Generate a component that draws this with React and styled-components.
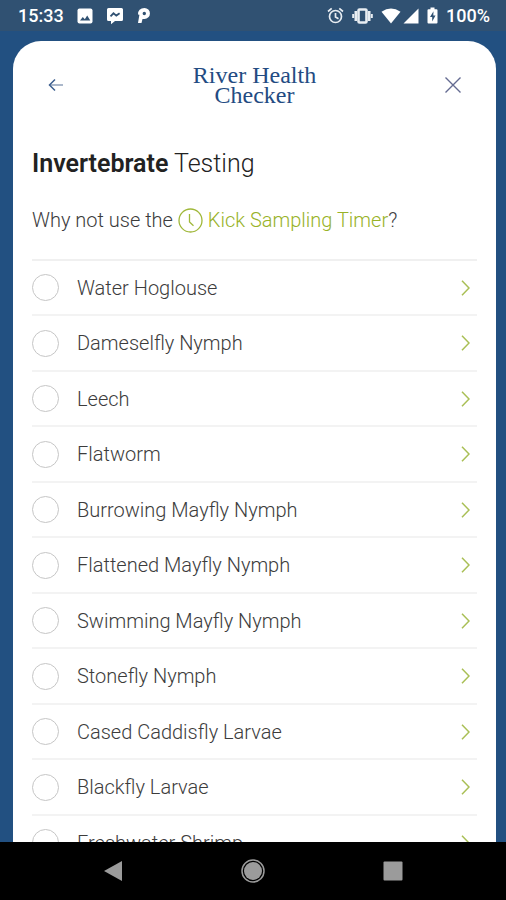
import React from "react";
import styled, { createGlobalStyle } from "styled-components";

const GlobalStyle = createGlobalStyle`
  * { box-sizing: border-box; }
  body { margin: 0; font-family: Roboto, "Liberation Sans", sans-serif; background: #225081; }
  button { padding: 0; border: 0; background: none; cursor: pointer; font: inherit; }
  svg { display: block; flex: none; }
`;

const Screen = styled.div`
  display: flex;
  flex-direction: column;
  height: 100vh;
  background: #225081;
`;

const StatusBar = styled.header`
  display: flex;
  flex: none;
  align-items: center;
  justify-content: space-between;
  height: 31px;
  padding: 0 16px 0 18px;
  background: #305172;
  color: #fff;
  font-size: 18px;
  font-weight: 500;
  line-height: 30px;
`;

const StatusGroup = styled.div`
  display: flex;
  align-items: center;
  gap: ${(p) => p.$gap}px;
`;

const SignalPair = styled.div`
  display: flex;
  align-items: center;
  gap: 2px;
`;

const Card = styled.main`
  flex: 1;
  min-height: 0;
  margin: 10px 10px 0 13px;
  padding: 0 19px;
  overflow-y: auto;
  scrollbar-width: none;
  border-radius: 28px 28px 0 0;
  background: #fff;
  color: #3c3c3c;
`;

const CardHeader = styled.div`
  display: flex;
  align-items: center;
  justify-content: space-between;
  height: 88px;
  padding: 0 12px;
`;

const IconButton = styled.button`
  display: flex;
  align-items: center;
  justify-content: center;
  width: 24px;
  height: 40px;
  color: ${(p) => p.$color};
`;

const Logo = styled.div`
  display: flex;
  flex-direction: column;
  align-items: center;
  color: #234b82;
  font-family: "Liberation Serif", serif;
  font-size: 24px;
  line-height: 20px;
`;

const Title = styled.h1`
  margin: 20px 0 0;
  color: #222;
  font-size: 25px;
  font-weight: 300;
  line-height: 30px;
`;

const Strong = styled.b`
  font-weight: 600;
`;

const Hint = styled.p`
  display: flex;
  align-items: center;
  margin: 28px 0 0;
  font-size: 20px;
  font-weight: 300;
  line-height: 26px;
  white-space: pre;
`;

const TimerLink = styled.a`
  display: flex;
  align-items: center;
  gap: 5px;
  color: #98b228;
  text-decoration: none;
`;

const List = styled.ul`
  margin: 26px 0 0;
  padding: 0;
  list-style: none;
  border-top: 2px solid #f0f0f0;
`;

const Row = styled.li`
  display: flex;
  align-items: center;
  height: 55px;
  border-bottom: 2px solid #f3f3f3;
  &:nth-child(even) { height: 56px; }
`;

const RowLabel = styled.label`
  display: flex;
  flex: 1;
  align-items: center;
  gap: 18px;
  font-size: 20px;
  font-weight: 300;
  line-height: 26px;
  cursor: pointer;
`;

const Tick = styled.input`
  appearance: none;
  flex: none;
  width: 27px;
  height: 27px;
  margin: 0;
  border: 1px solid #c6c6c6;
  border-radius: 50%;
  background: #fff;
  &:checked { background: #a0b83a; }
`;

const NavBar = styled.nav`
  display: flex;
  flex: none;
  align-items: center;
  justify-content: center;
  gap: 116px;
  height: 58px;
  background: #000;
`;

const NavButton = styled.button`
  display: flex;
  align-items: center;
  justify-content: center;
  width: 24px;
  height: 40px;
`;

const animals = [
  "Water Hoglouse",
  "Dameselfly Nymph",
  "Leech",
  "Flatworm",
  "Burrowing Mayfly Nymph",
  "Flattened Mayfly Nymph",
  "Swimming Mayfly Nymph",
  "Stonefly Nymph",
  "Cased Caddisfly Larvae",
  "Blackfly Larvae",
  "Freshwater Shrimp",
];

const PhotoIcon = () => (
  <svg width="16" height="16" viewBox="0 0 16 16">
    <rect x="0.5" y="0.5" width="15" height="15" rx="2" fill="#fff" />
    <path d="M3 12.5l2.8-3.6 2 2.3 2.4-3.6 3.1 4.9z" fill="#305172" />
  </svg>
);

const MessageIcon = () => (
  <svg width="18" height="18" viewBox="0 0 18 18">
    <path d="M2.5 1h13q1.5 0 1.5 1.5v10q0 1.5-1.5 1.5H9l-4 3.2V14H2.5Q1 14 1 12.5v-10Q1 1 2.5 1z" fill="#fff" />
    <path d="M4.5 9.3l3-3 2.8 2.3 3.3-2.3" fill="none" stroke="#305172" strokeWidth="1.8" />
  </svg>
);

const ParkingIcon = () => (
  <svg width="14" height="17" viewBox="0 0 14 17">
    <path
      d="M7.5 1a5.300 5.300 0 0 1 0 10.900H5.500L4.500 16H1l1.400-8.200L1 7.500Q1 1 7.500 1zM7.300 4.800a1.700 1.700 0 1 0 0 3.400 1.700 1.700 0 0 0 0-3.400z"
      fill="#fff"
      fillRule="evenodd"
    />
  </svg>
);

const AlarmIcon = () => (
  <svg width="17" height="17" viewBox="0 0 17 17" fill="none" stroke="#e8edf2" strokeWidth="1.7">
    <circle cx="8.5" cy="9.5" r="6" />
    <path d="M1 4.5L4.7 1.4M16 4.5l-3.7-3.1M8.5 6v4l3 1.7" />
  </svg>
);

const VibrateIcon = () => (
  <svg width="21" height="16" viewBox="0 0 21 16" fill="none" stroke="#e8edf2">
    <rect x="6.5" y="1.5" width="8" height="13" rx="1" strokeWidth="2.6" />
    <path d="M3.8 3v10M17.200 3v10" strokeWidth="2.600" />
    <path d="M1.200 6v4M19.800 6v4" strokeWidth="2" />
  </svg>
);

const WifiIcon = () => (
  <svg width="20" height="16" viewBox="0 0 20 16">
    <path d="M0.5 3.7Q10-2.5 19.5 3.7L10 15.500z" fill="#fff" />
  </svg>
);

const SignalIcon = () => (
  <svg width="16" height="16" viewBox="0 0 16 16">
    <path d="M15.5 0.5v15H0.5z" fill="#fff" />
  </svg>
);

const BatteryIcon = () => (
  <svg width="11" height="17" viewBox="0 0 11 17">
    <path d="M3.5 0.5h4v1.7h2q1 0 1 1v12.3q0 1-1 1h-8q-1 0-1-1V3.2q0-1 1-1h2z" fill="#fff" />
    <path d="M6.5 4.2L3 10h2.2v4.5L8.5 8.5H6.3z" fill="#305172" />
  </svg>
);

const BackIcon = () => (
  <svg width="16" height="14" viewBox="0 0 16 14" fill="none" strokeWidth="1.5">
    <path d="M1.5 7H15" stroke="#8fa0ba" />
    <path d="M7 1.5L1.5 7 7 12.5" stroke="#3c5f8f" />
  </svg>
);

const CloseIcon = () => (
  <svg width="16" height="16" viewBox="0 0 16 16" fill="none" stroke="currentColor" strokeWidth="1.4">
    <path d="M0.5 0.5l15 15M15.5 0.5l-15 15" />
  </svg>
);

const ClockIcon = () => (
  <svg width="25" height="25" viewBox="0 0 25 25" fill="none" stroke="#a0b83a" strokeWidth="1.3">
    <circle cx="12.5" cy="12.5" r="11.5" />
    <path d="M11.5 6v8l4 3.8" />
  </svg>
);

const ChevronIcon = () => (
  <svg width="9" height="16" viewBox="0 0 9 16" fill="none" stroke="currentColor" strokeWidth="1.5">
    <path d="M1 0.8L8 8 1 15.2" />
  </svg>
);

export default function App() {
  return (
    <>
      <GlobalStyle />
      <Screen>
        <StatusBar>
          <StatusGroup $gap={13}>
            <span>15:33</span>
            <PhotoIcon />
            <MessageIcon />
            <ParkingIcon />
          </StatusGroup>
          <StatusGroup $gap={8}>
            <AlarmIcon />
            <VibrateIcon />
            <SignalPair>
              <WifiIcon />
              <SignalIcon />
            </SignalPair>
            <BatteryIcon />
            <span>100%</span>
          </StatusGroup>
        </StatusBar>
        <Card>
          <CardHeader>
            <IconButton $color="#3c5f8f" aria-label="Back">
              <BackIcon />
            </IconButton>
            <Logo>
              <span>River Health</span>
              <span>Checker</span>
            </Logo>
            <IconButton $color="#646b91" aria-label="Close">
              <CloseIcon />
            </IconButton>
          </CardHeader>
          <Title>
            <Strong>Invertebrate</Strong> Testing
          </Title>
          <Hint>
            {"Why not use the "}
            <TimerLink href="#timer">
              <ClockIcon />
              Kick Sampling Timer
            </TimerLink>
            ?
          </Hint>
          <List>
            {animals.map((name) => (
              <Row key={name}>
                <RowLabel>
                  <Tick type="checkbox" />
                  {name}
                </RowLabel>
                <IconButton $color="#a9bf55" aria-label={`About ${name}`}>
                  <ChevronIcon />
                </IconButton>
              </Row>
            ))}
          </List>
        </Card>
        <NavBar>
          <NavButton aria-label="Back">
            <svg width="20" height="22" viewBox="0 0 20 22">
              <path d="M19 1v20L1 11z" fill="#9b9b9b" />
            </svg>
          </NavButton>
          <NavButton aria-label="Home">
            <svg width="24" height="24" viewBox="0 0 24 24">
              <circle cx="12" cy="12" r="9" fill="#9b9b9b" />
              <circle cx="12" cy="12" r="11" fill="none" stroke="#9b9b9b" strokeWidth="1.5" />
            </svg>
          </NavButton>
          <NavButton aria-label="Recent apps">
            <svg width="20" height="20" viewBox="0 0 20 20">
              <rect x="0.5" y="0.5" width="19" height="19" rx="1" fill="#9b9b9b" />
            </svg>
          </NavButton>
        </NavBar>
      </Screen>
    </>
  );
}
